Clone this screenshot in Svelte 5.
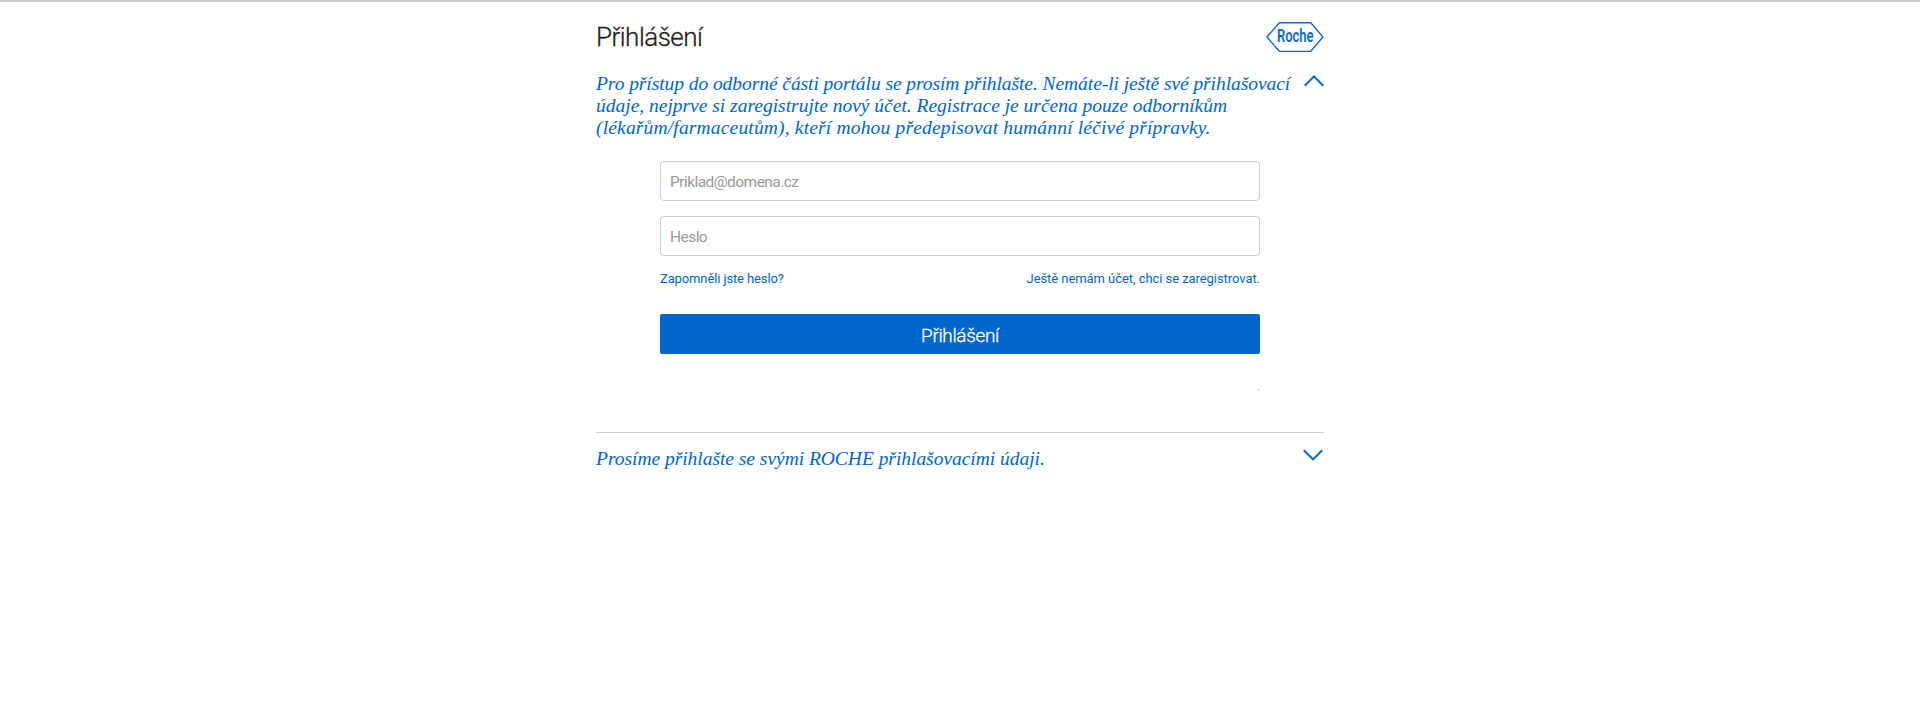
<script>
  const intro = [
    { text: 'Pro přístup do odborné části portálu se prosím přihlašte. Nemáte-li ještě své přihlašovací', tracking: -0.065 },
    { text: 'údaje, nejprve si zaregistrujte nový účet. Registrace je určena pouze odborníkům', tracking: -0.01 },
    { text: '(lékařům/farmaceutům), kteří mohou předepisovat humánní léčivé přípravky.', tracking: 0.17 }
  ];
</script>

<main>
  <header>
    <h1>Přihlášení</h1>
    <svg class="logo" width="58" height="32" viewBox="0 0 58 32" role="img" aria-label="Roche">
      <path d="M.9 16 13.3 1.7h31.4L57 16 44.7 30.3H13.3z" fill="none" stroke="#0f68d2" stroke-width="1.35" />
      <text x="10.9" y="21.2" textLength="36.6" lengthAdjust="spacingAndGlyphs">Roche</text>
    </svg>
  </header>

  <section class="intro">
    <p>
      {#each intro as line}
        <span style:letter-spacing="{line.tracking}px">{line.text}</span>
      {/each}
    </p>
    <svg class="up" width="20" height="12" viewBox="0 0 20 12"><path d="M.8 10.7 10 1.4l9.2 9.3" /></svg>
  </section>

  <form onsubmit={(e) => e.preventDefault()}>
    <input type="email" placeholder="Priklad@domena.cz" />
    <input type="password" placeholder="Heslo" />
    <nav>
      <a class="forgot" href="#heslo">Zapomněli jste heslo?</a>
      <a href="#registrace">Ještě nemám účet, chci se zaregistrovat.</a>
    </nav>
    <button>Přihlášení</button>
    <i class="dot"></i>
  </form>

  <section class="other">
    <p>Prosíme přihlašte se svými ROCHE přihlašovacími údaji.</p>
    <svg class="down" width="20" height="12" viewBox="0 0 20 12"><path d="M.8 1.2 10 10.4l9.2-9.2" /></svg>
  </section>
</main>

<style>
  :global(body) {
    background: #fff;
    border-top: 2px solid #ccc;
    font-family: Roboto, "Liberation Sans", sans-serif;
  }
  main {
    width: 728px;
    margin: 0 auto;
  }
  header {
    display: flex;
    justify-content: space-between;
    align-items: flex-start;
    height: 69px;
    padding-top: 19px;
    box-sizing: border-box;
  }
  h1 {
    margin: 0;
    font-size: 26px;
    line-height: 32px;
    font-weight: 300;
    letter-spacing: -0.5px;
    color: #222;
    -webkit-text-stroke: 0.3px #222;
  }
  .logo { overflow: visible; }
  .logo text {
    font: 600 17.5px Roboto, sans-serif;
    fill: #0f68d2;
  }
  section {
    display: flex;
    justify-content: space-between;
    align-items: flex-start;
  }
  section p {
    margin: 0;
    font: italic 19.5px/22px "Liberation Serif", serif;
    color: #06c;
    white-space: nowrap;
  }
  section svg {
    fill: none;
    stroke: #06c;
    stroke-width: 2;
  }
  .intro { height: 90px; }
  .intro p { padding-top: 2px; }
  .intro span { display: block; }
  .up { margin-top: 4px; }
  form {
    display: flex;
    flex-direction: column;
    width: 600px;
    height: 271px;
    margin: 0 auto;
  }
  input {
    width: 100%;
    height: 40px;
    margin: 0 0 15px;
    padding: 1px 9px 0;
    box-sizing: border-box;
    border: 1px solid #ccc;
    border-radius: 4px;
    outline: 0;
    background: #fff;
    font: 15.5px Roboto, sans-serif;
    letter-spacing: -0.55px;
  }
  input::placeholder {
    color: #999;
    opacity: 1;
  }
  nav {
    display: flex;
    justify-content: space-between;
    height: 43px;
    font-size: 13px;
    line-height: 16px;
    letter-spacing: -0.06px;
  }
  a {
    color: #06c;
    text-decoration: none;
  }
  .forgot { letter-spacing: -0.12px; }
  button {
    height: 40px;
    padding: 2px 0 0;
    border: 0;
    border-radius: 2px;
    background: #06c;
    color: #fff;
    font: 300 19px Roboto, sans-serif;
    letter-spacing: -0.35px;
    -webkit-text-stroke: 0.3px #fff;
  }
  .dot {
    align-self: flex-end;
    width: 1px;
    height: 1px;
    margin: 35px 1px 0 0;
    background: #999;
  }
  .other {
    padding-top: 15px;
    border-top: 1px solid #ccc;
  }
  .other p { letter-spacing: -0.03px; }
  .down { margin: 1px 1px 0 0; }
</style>
